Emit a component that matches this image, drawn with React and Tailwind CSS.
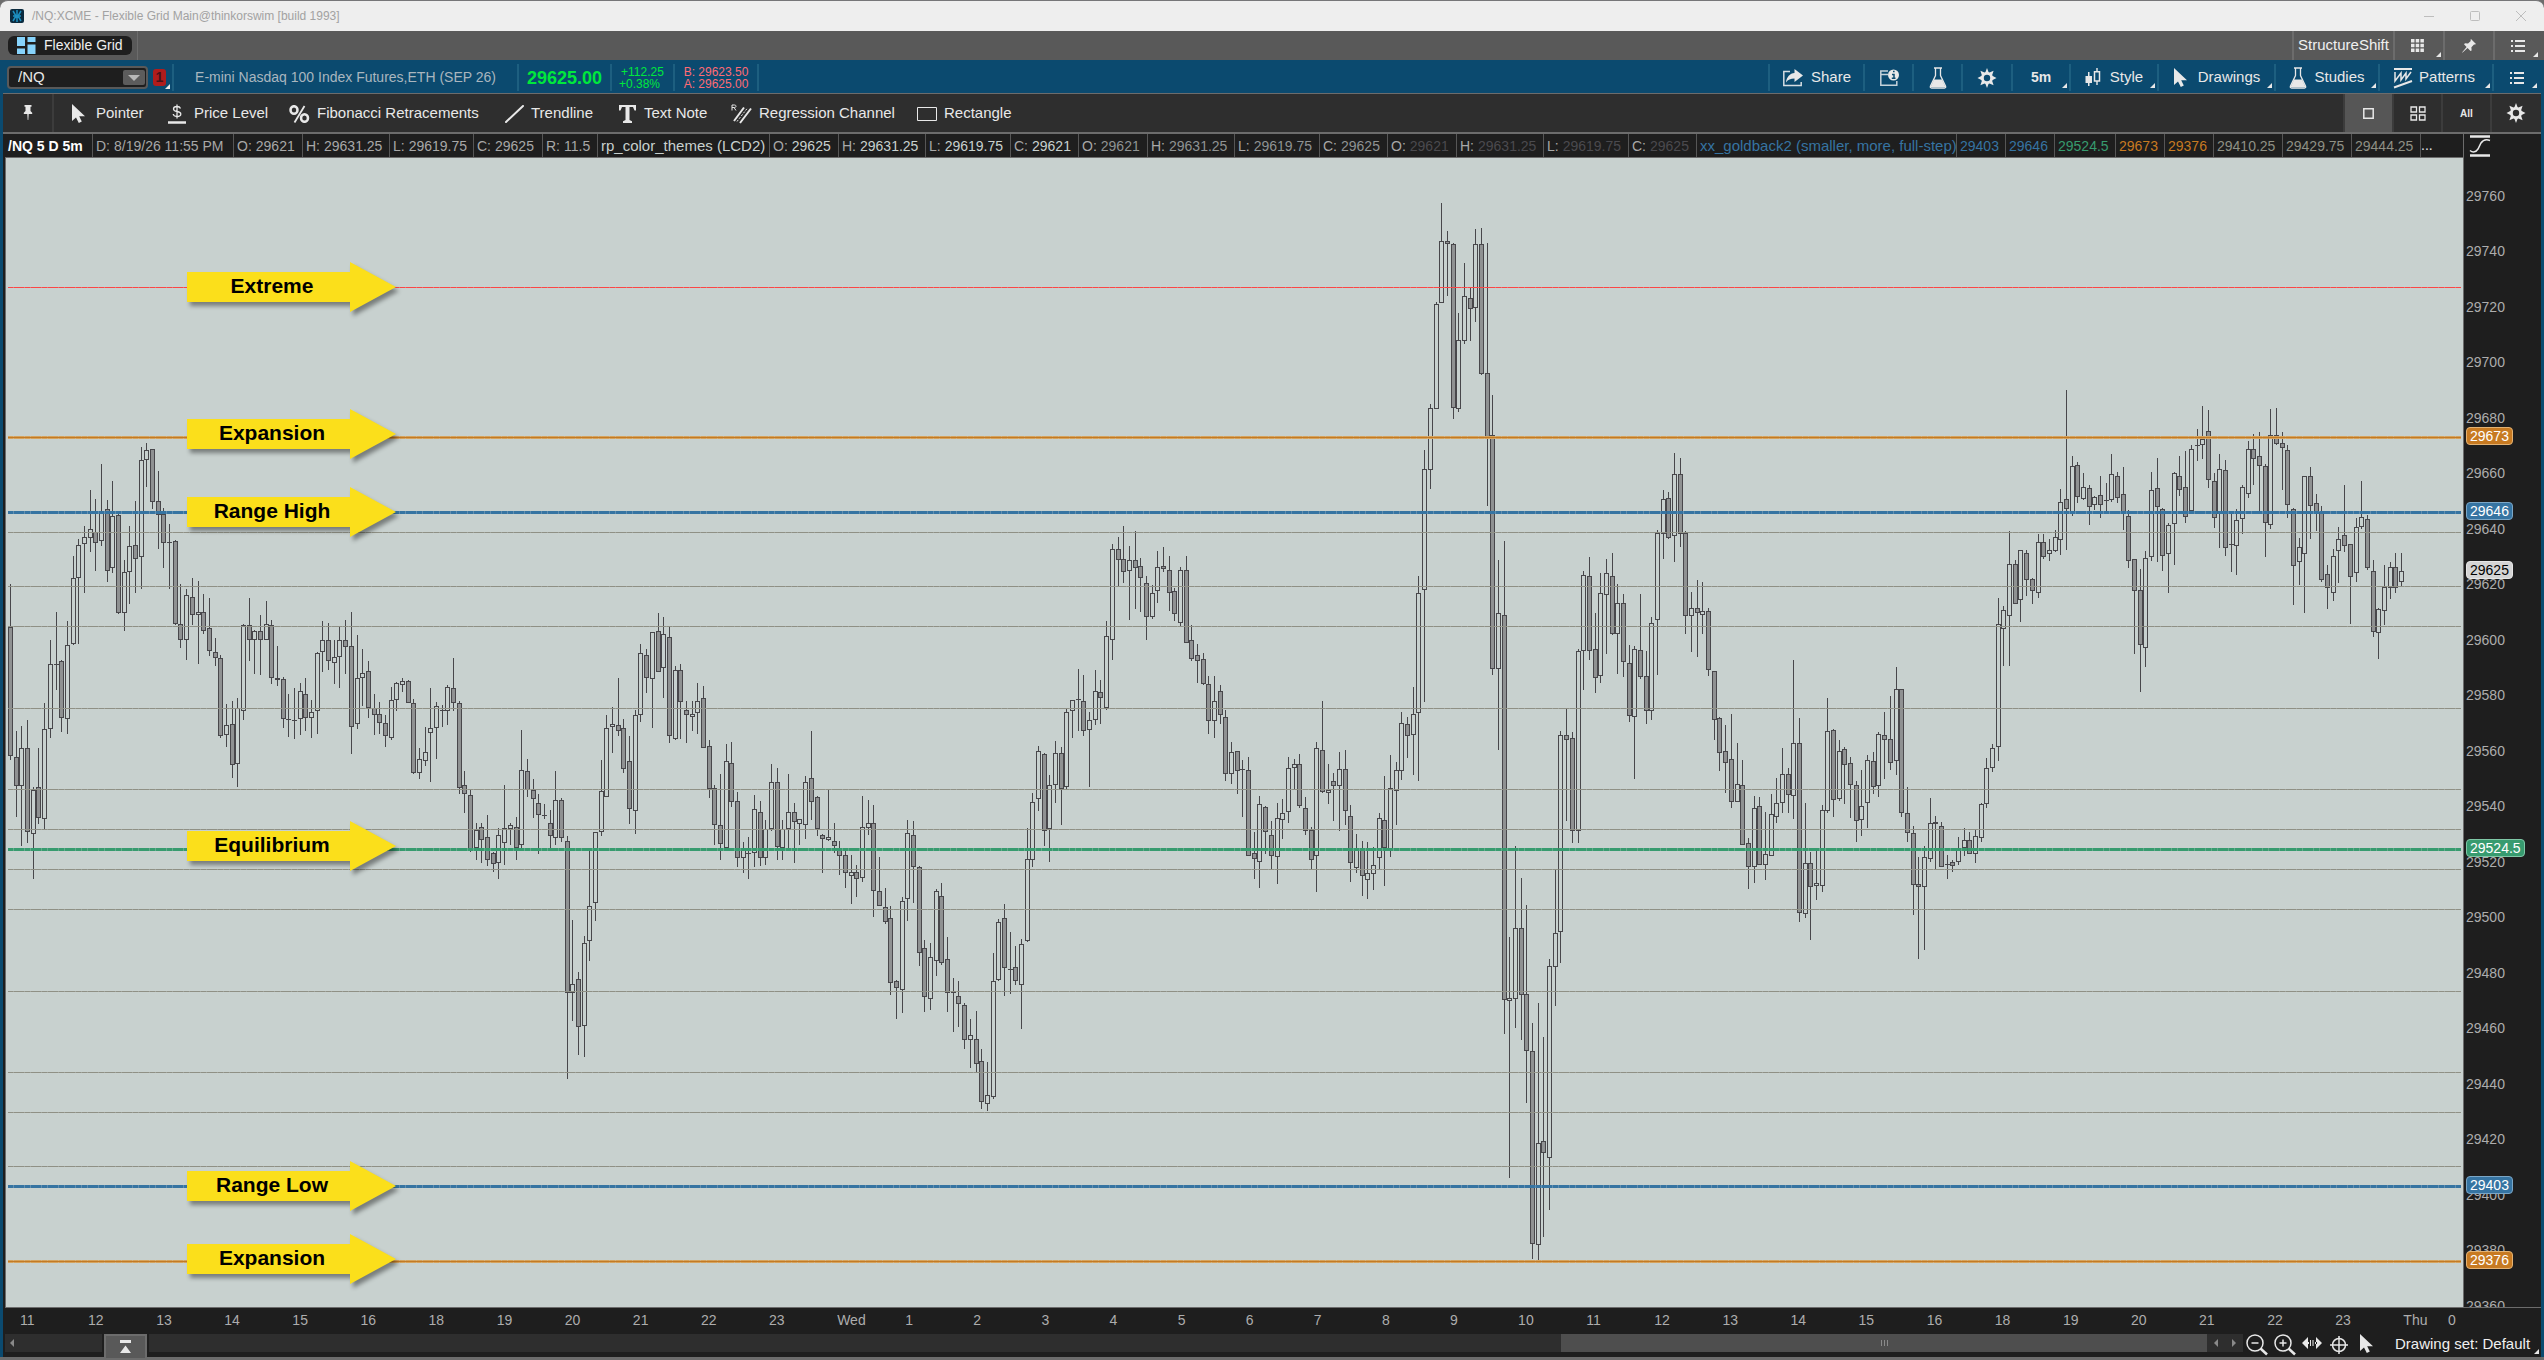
import React from "react";

// Plot area in its own units, stretched to whatever room the page gives it
const PLOT_W = 2457;
const PLOT_H = 1149;
const PRICE_TOP = 29773.7;
const PX_PER_POINT = 2.7743;
const BAR_STEP = 5.679;

const priceToY = (price) => (PRICE_TOP - price) * PX_PER_POINT;
const pct = (value, total) => `${(value / total) * 100}%`;

// 5 minute bars, oldest first: high, body top, body bottom, low, up/down.
// Every run is measured down from its own top edge at its own scale.
const RUNS = [
  {
    top: 82,
    scale: 2.24,
    bars: `770 866 1156 1165 d,1100 1158 1222 1292 d,1089 1137 1222 1357 u,1075 1137 1327 1351 d,1225 1231 1330 1431 u,
1138 1226 1294 1308 d,1037 1096 1297 1320 u,896 950 1095 1116 u,833 949 951 1008 d,940 943 1070 1102 d,
853 907 1073 1106 u,708 758 905 907 u,670 684 758 905 u,641 666 682 791 u,560 648 667 699 u,
580 655 678 741 d,502 612 675 685 u,582 603 741 766 d,540 618 734 747 u,612 616 835 838 d,
717 744 835 876 u,641 686 743 815 u,585 684 714 791 d,464 493 711 782 u,455 471 492 553 u,
468 469 586 603 d,517 585 617 692 d,600 614 678 735 d,636 677 678 782 d,672 674 861 862 d,
771 861 897 914 d,782 796 895 941 u,757 800 839 862 d,764 833 841 950 u,793 834 875 883 d,
802 870 920 932 d,892 923 937 954 d,930 937 1110 1116 d,1039 1087 1109 1136 u,1033 1085 1175 1205 d,
1026 1049 1173 1225 u,860 863 1054 1075 u,802 863 897 943 d,874 875 895 972 u,840 875 897 974 d,
809 861 897 897 u,852 863 982 995 d,909 980 985 999 d,978 984 1074 1093 d,1017 1074 1075 1113 d,
1004 1076 1078 1118 d,992 1011 1074 1109 u,981 1016 1070 1100 d,1031 1058 1070 1116 u,923 926 1056 1107 u,
853 897 924 968 u,858 897 944 963 d,895 933 947 995 u,867 895 935 1004 u,851 895 911 972 d,
833 910 1090 1151 d,885 982 1085 1095 u,916 969 982 1044 u,943 966 1049 1070 d,1017 1049 1063 1109 d,
1035 1061 1081 1107 d,1064 1081 1112 1136 d,1001 1031 1115 1120 u,989 993 1030 1056 u,981 987 997 1012 u,
986 987 1038 1038 d,1028 1038 1195 1197 d,1138 1163 1193 1207 u,1091 1147 1166 1178 u,1003 1094 1105 1214 u,
1034 1043 1094 1163 u,1042 1052 1053 1091 d,997 1002 1054 1086 u,937 1004 1038 1055 d,1033 1036 1227 1241 d,
1189 1221 1241 1284 d,1232 1243 1367 1372 d,1306 1321 1361 1388 u,1306 1315 1343 1396 d,1287 1338 1388 1402 d,
1370 1373 1397 1416 d,1317 1333 1395 1431 u,1221 1317 1350 1400 u,1305 1311 1319 1355 u,1292 1315 1361 1389 d,
1098 1187 1355 1367 u,1163 1190 1231 1248 d,1207 1231 1253 1295 d,1241 1260 1289 1375 d,1263 1289 1290 1298 d,
1277 1306 1336 1362 d`,
  },
  {
    top: 582,
    scale: 3,
    bars: `93 181 295 315 u,174 181 295 306 d,288 304 760 1017 d,540 733 760 843 u,696 718 862 945 d,
588 610 857 950 u,330 499 604 663 u,276 277 488 543 u,60 154 277 288 u`,
  },
  {
    top: 82,
    scale: 2.24,
    bars: `1064 1093 1247 1247 u,1046 1084 1090 1149 u,981 1087 1099 1111 d,1073 1093 1184 1193 d,1110 1167 1274 1308 d,
1052 1063 1280 1331 u`,
  },
  {
    top: 342,
    scale: 2.529,
    bars: `364 388 543 561 u,377 393 450 488 d,334 335 452 577 u,286 332 434 434 d,296 340 424 501 u,
320 347 596 615 d,420 431 604 607 u,415 431 511 604 d,508 530 543 615 d,508 540 548 584 u,
463 509 538 592 u,470 502 626 627 d,607 623 732 754 d,721 729 823 873 d,693 823 870 910 d,
617 661 880 880 u,612 664 763 776 d,738 762 905 928 d,865 886 905 943 u,852 892 894 959 d,
746 782 894 928 u,761 790 905 926 d,809 831 905 923 u,668 714 832 837 u,678 714 877 910 d,
809 831 880 910 u,693 788 831 880 u,766 788 814 918 d,806 808 819 873 u,698 714 822 857 u,
584 704 763 809 d,749 752 833 850 d,845 846 857 943 d,732 853 859 862 u,817 863 875 893 d,
862 879 900 948 d,888 898 943 981 d,898 941 950 1022 u,923 941 958 1004 d,749 828 955 966 u,
759 818 829 847 u,771 818 988 1055 d,903 990 1026 1026 d,981 1030 1067 1072 d,1027 1058 1221 1252 d,
1214 1217 1234 1313 d,1004 1013 1239 1297 u,809 841 1008 1065 u,812 846 928 1019 d,926 927 1145 1179 d,
1113 1134 1256 1295 d,1120 1157 1261 1290 u,984 990 1165 1204 u,969 1002 1170 1175 d,1105 1162 1246 1295 d,
1209 1245 1247 1345 d,1216 1255 1274 1333 d,1272 1276 1365 1388 d,1313 1354 1365 1436 u,1292 1362 1426 1447 d,
1388 1420 1522 1540 d,1421 1506 1527 1545 u,1146 1217 1509 1515 u,1060 1066 1213 1216 u,1022 1056 1183 1254 d,
1093 1185 1187 1249 d,1128 1180 1216 1227 d,1110 1124 1226 1338 u,830 909 1115 1118 u,741 765 910 928 u,
622 636 755 787 u,640 643 836 875 d,695 722 832 916 u,609 641 722 766 u,625 641 732 822 d,
529 537 725 732 u,506 507 533 602 u,427 504 506 584 d,443 509 584 597 d,536 557 581 726 u,
430 482 556 569 u,455 485 502 567 d,306 345 527 530 u,111 125 353 405 u,94 125 151 217 d,
66 150 181 210 d,116 153 179 303 u,78 153 171 276 d,147 168 196 283 d,192 211 295 354 d,
215 234 297 301 u,129 170 230 260 u,119 168 174 182 d,142 176 235 281 d,223 229 288 306 d,
169 176 310 319 u,142 178 361 361 d,317 355 402 407 d,364 393 406 463 d,387 403 465 468 d,
445 466 558 592 d,445 509 558 602 u,468 482 543 567 d,530 549 692 711 d,612 638 692 718 u,
635 636 685 744 d,658 680 682 802 d,650 682 900 900 d,840 893 907 959 d,749 770 915 981 u,
773 777 839 895 d,812 848 900 935 d,766 803 902 971 u`,
  },
  {
    top: 562,
    scale: 2.8,
    bars: `221 259 279 333 u,104 133 257 288 u,109 124 133 195 u,95 124 240 246 d,216 247 310 322 d,
300 309 391 417 d,62 77 380 482 u,-53 85 201 204 d,123 197 204 235 u,148 172 184 283 d,
90 138 184 311 u,84 138 254 294 d,238 270 400 454 d,319 362 413 428 u,339 357 436 493 d,
342 429 447 501 u,356 407 430 476 u,260 273 385 417 u,157 281 358 465 d,98 191 362 384 u,
118 141 198 294 u,-22 9 142 168 u,-8 12 44 106 d,-92 -16 41 154 u,-403 -355 -21 171 u`,
  },
  {
    top: 22,
    scale: 2.8,
    bars: `756 810 1147 1462 u,627 639 811 865 u,342 348 640 640 u,64 172 343 343 u,143 172 178 325 d,
177 178 637 669 d,372 449 640 650 u,232 326 450 459 u,301 329 360 451 d,137 180 357 398 u,
134 180 542 546 d,176 541 721 913 d,602 715 1368 1386 d,1064 1211 1370 1596 u,1011 1217 2295 2391 d`,
  },
  {
    top: 562,
    scale: 2.8,
    bars: `608 777 786 1282 u,353 581 780 862 u,442 583 769 896 d,518 768 926 1072 d,848 928 1466 1509 d,
792 1185 1469 1520 u,888 1180 1211 1448 d,669 690 1225 1372 u,419 597 691 801 u,31 43 593 680 u,
-31 43 55 283 d,34 51 310 344 d,-199 -192 310 344 u`,
  },
  {
    top: 22,
    scale: 2.8,
    bars: `1095 1107 1320 1428 u,1056 1110 1318 1344 d,1212 1314 1393 1436 d,1100 1155 1390 1408 u,1061 1101 1161 1327 u,
1044 1110 1270 1274 d,1131 1183 1270 1383 u,1159 1185 1349 1392 d,1302 1351 1500 1518 d,1305 1314 1503 1677 u,
1159 1317 1391 1397 d,1319 1390 1486 1523 d,1224 1239 1486 1512 u,980 989 1231 1386 u,868 894 990 1061 u,
874 889 1001 1005 d,764 824 998 1070 u,778 824 990 1028 d,983 989 1220 1271 d,1154 1199 1220 1322 u,
1120 1197 1211 1336 d,1126 1208 1217 1271 u,1198 1208 1371 1389 d,1375 1376 1511 1568 d,1504 1507 1604 1655 d`,
  },
  {
    top: 562,
    scale: 2.8,
    bars: `14 88 120 204 d,-17 110 229 246 d,64 180 229 229 u,112 183 349 349 d,330 343 411 473 d,
213 245 411 456 u,216 242 405 405 d,258 374 405 448 u,207 264 380 380 u,162 233 271 288 u,
78 152 231 260 u,134 152 209 260 d,-168 65 212 277 u,-6 63 540 566 d,232 399 542 554 u,
370 399 467 616 d,365 455 464 504 u,238 253 464 482 u,-62 32 254 260 u,25 29 223 272 d,
56 88 220 227 u,76 82 125 235 d,104 121 181 274 d,171 183 282 342 d,140 242 279 325 u,
98 113 231 302 u,90 116 187 207 d,34 40 184 216 u,-22 43 55 165 d,-67 54 120 140 d,
-148 -86 114 154 u,-86 -86 259 272 d,188 259 316 342 d,297 315 461 546 d,384 458 467 669 d`,
  },
  {
    top: 212,
    scale: 2.6133,
    bars: `1244 1273 1350 1516 u,1119 1185 1277 1287 u,1166 1182 1187 1304 u,1180 1192 1298 1298 d,1267 1292 1294 1330 d,
1281 1286 1295 1312 d,1220 1248 1287 1294 u,1197 1229 1250 1271 u,1207 1227 1264 1264 d,1201 1218 1264 1288 u,
1132 1133 1222 1233 u,1014 1041 1133 1145 u,977 989 1039 1050 u,596 664 984 1022 u,617 628 676 774 u,
421 508 642 774 u,497 508 611 611 d,470 471 600 659 u,471 479 550 591 d,544 545 577 612 d,
429 450 582 596 u,429 450 488 494 d,442 471 480 499 u,418 437 472 476 u,311 346 443 483 u,
52 338 362 470 d,225 251 371 381 u,240 249 331 348 d,269 306 336 341 u,301 309 357 405 d,
328 333 352 366 u,277 327 354 387 d,295 341 343 370 d,220 272 339 345 u,267 278 334 348 d,
253 325 371 418 d,366 382 499 517 d,494 495 577 742 d,520 576 718 841 d,473 492 726 776 u,
267 314 488 500 u,230 309 357 503 d,361 362 486 525 d,400 405 482 583 u,267 268 402 510 u,
225 278 313 329 d,212 306 383 400 d,196 207 368 370 u,154 197 199 238 d,94 181 195 233 u,
105 160 287 308 d,269 291 386 413 d,220 260 377 465 u,235 262 465 486 d,375 456 458 528 d,
363 393 461 536 u,301 307 390 429 u,186 207 323 335 u,167 207 232 301 d,162 225 250 368 d,
245 251 399 489 d,102 171 404 415 u,99 171 194 195 d,162 191 203 314 d,197 210 354 387 d,
361 362 512 614 d,439 463 503 562 u,277 278 480 635 u,253 278 356 442 d,324 348 371 421 d,
355 371 549 553 d,510 534 569 625 d,468 487 582 604 u,410 442 474 557 u,301 432 459 476 d,
455 456 540 664 d,388 411 530 554 u,290 385 411 416 u,379 390 517 522 d,497 524 684 698 d,
623 624 686 755 u,510 568 631 666 u,502 515 569 598 u,478 515 569 583 d,478 524 553 565 u`,
  },
];

const CANDLES = RUNS.flatMap((run) =>
  run.bars.split(",").map((bar) => {
    const parts = bar.trim().split(" ");
    const [high, open, close, low] = parts
      .slice(0, 4)
      .map((n) => Math.round(run.top + Number(n) / run.scale));
    return { high, top: open, bottom: close, low, up: parts[4] === "u" };
  })
);

const LEVELS = [
  { y: 129, color: "#fb4646", width: 1 },
  { y: 279, color: "#d6a35c", core: "#c27a26", width: 3 },
  { y: 354, color: "#3674a2", width: 3 },
  { y: 374, color: "#8f9085", width: 1 },
  { y: 428, color: "#8f9085", width: 1 },
  { y: 468, color: "#8f9085", width: 1 },
  { y: 550, color: "#8f9085", width: 1 },
  { y: 631, color: "#8f9085", width: 1 },
  { y: 671, color: "#8f9085", width: 1 },
  { y: 691, color: "#379b6f", width: 3 },
  { y: 711, color: "#8f9085", width: 1 },
  { y: 751, color: "#8f9085", width: 1 },
  { y: 833, color: "#8f9085", width: 1 },
  { y: 914, color: "#8f9085", width: 1 },
  { y: 954, color: "#8f9085", width: 1 },
  { y: 1008, color: "#8f9085", width: 1 },
  { y: 1028, color: "#3674a2", width: 3 },
  { y: 1103, color: "#d6a35c", core: "#c27a26", width: 3 },
];

const CALLOUTS = [
  { label: "Extreme", y: 104 },
  { label: "Expansion", y: 251 },
  { label: "Range High", y: 329 },
  { label: "Equilibrium", y: 663 },
  { label: "Range Low", y: 1003 },
  { label: "Expansion", y: 1076 },
];

const PRICE_TICKS = Array.from({ length: 21 }, (_, i) => 29760 - i * 20);

const PRICE_TAGS = [
  { price: 29673, style: "bg-[#c77a22] border-[#e3b273] text-white" },
  { price: 29646, style: "bg-[#3674a2] border-[#7ba6c6] text-white" },
  { price: 29625, style: "bg-[#d4d4d4] border-[#e6e6e6] text-black" },
  { price: 29524.5, style: "bg-[#379b6f] border-[#7fc7a6] text-white" },
  { price: 29403, style: "bg-[#3674a2] border-[#7ba6c6] text-white" },
  { price: 29376, style: "bg-[#c77a22] border-[#e3b273] text-white" },
];

const HOURS = [
  "11", "12", "13", "14", "15", "16", "18", "19", "20", "21", "22", "23", "Wed",
  "1", "2", "3", "4", "5", "6", "7", "8", "9", "10", "11", "12", "13", "14", "15", "16",
  "18", "19", "20", "21", "22", "23", "Thu",
];

const DIM = "text-[#a8a8a8]";
const STATUS = [
  { w: "w-[141px]", key: "D:", value: "8/19/26 11:55 PM", color: DIM },
  { w: "w-[69px]", key: "O:", value: "29621", color: DIM },
  { w: "w-[87px]", key: "H:", value: "29631.25", color: DIM },
  { w: "w-[84px]", key: "L:", value: "29619.75", color: DIM },
  { w: "w-[69px]", key: "C:", value: "29625", color: DIM },
  { w: "w-[55px]", key: "R:", value: "11.5", color: DIM },
  { w: "w-[172px]", value: "rp_color_themes (LCD2)", color: "text-[#c8d1cf] text-[15px]" },
  { w: "w-[69px]", key: "O:", value: "29625", color: "text-[#c8d1cf]" },
  { w: "w-[87px]", key: "H:", value: "29631.25", color: "text-[#c8d1cf]" },
  { w: "w-[85px]", key: "L:", value: "29619.75", color: "text-[#c8d1cf]" },
  { w: "w-[68px]", key: "C:", value: "29621", color: "text-[#c8d1cf]" },
  { w: "w-[69px]", key: "O:", value: "29621", color: "text-[#8f9393]" },
  { w: "w-[87px]", key: "H:", value: "29631.25", color: "text-[#8f9393]" },
  { w: "w-[85px]", key: "L:", value: "29619.75", color: "text-[#8f9393]" },
  { w: "w-[68px]", key: "C:", value: "29625", color: "text-[#8f9393]" },
  { w: "w-[69px]", key: "O:", value: "29621", color: "text-[#4b4a4e]" },
  { w: "w-[87px]", key: "H:", value: "29631.25", color: "text-[#4b4a4e]" },
  { w: "w-[85px]", key: "L:", value: "29619.75", color: "text-[#4b4a4e]" },
  { w: "w-[68px]", key: "C:", value: "29625", color: "text-[#4b4a4e]" },
  { w: "w-[260px]", value: "xx_goldback2 (smaller, more, full-step)", color: "text-[#3674a2] text-[15px]" },
  { w: "w-[49px]", value: "29403", color: "text-[#3674a2]" },
  { w: "w-[49px]", value: "29646", color: "text-[#3674a2]" },
  { w: "w-[61px]", value: "29524.5", color: "text-[#379b6f]" },
  { w: "w-[49px]", value: "29673", color: "text-[#c77a22]" },
  { w: "w-[49px]", value: "29376", color: "text-[#c77a22]" },
  { w: "w-[69px]", value: "29410.25", color: "text-[#8f9085]" },
  { w: "w-[69px]", value: "29429.75", color: "text-[#8f9085]" },
  { w: "w-[69px]", value: "29444.25", color: "text-[#8f9085]" },
];

/* ---------- icons ---------- */

const PointerIcon = () => (
  <svg width="16" height="20" viewBox="0 0 16 20" fill="#e8e8e8">
    <path d="M1 0v17l4-3.6L7.8 19l3-1.4-2.6-5.4H14z" />
  </svg>
);

const FlaskIcon = () => (
  <svg width="18" height="22" viewBox="0 0 18 22" fill="none" stroke="#e8e8e8">
    <path d="M5 1h8M6.5 1v7.5L1.5 19c-.6 1.400 0 2 1 2h13c1 0 1.600-.6 1-2l-5-10.500V1" strokeWidth="1.300" />
    <path d="M5 12.500h8l3.500 7.500h-15z" fill="#e8e8e8" stroke="none" />
  </svg>
);

const GearIcon = () => (
  <svg width="20" height="20" viewBox="0 0 20 20" fill="#e8e8e8">
    <path
      fillRule="evenodd"
      d="M10 0l1.500 4 1 .4L16.600 2.800 15.200 6.900l.5 1.200L19.500 10l-3.800 1.900-.5 1.200 1.400 4.100-4.100-1.600-1 .4L10 20l-1.500-4-1-.4-4.100 1.600 1.400-4.100-.5-1.200L.5 10l3.800-1.900.5-1.200L3.400 2.800l4.100 1.600 1-.4zM10 6.800a3.200 3.200 0 100 6.400 3.200 3.200 0 000-6.400z"
    />
  </svg>
);

const ListIcon = () => (
  <svg width="16" height="14" viewBox="0 0 16 14" fill="#e8e8e8">
    <path d="M1 1h2v2H1zM5 1h10v2H5zM1 6h2v2H1zM5 6h10v2H5zM1 11h2v2H1zM5 11h10v2H5z" />
  </svg>
);

const ShareIcon = () => (
  <svg width="22" height="18" viewBox="0 0 22 18" fill="none" stroke="#d5dde2" strokeWidth="1.500">
    <path d="M8 2.500H1.800v14h17.400V13" />
    <path d="M12.500 0l8.500 6.500-8.500 6.500V9.500C8.500 9.500 6 10.500 4 13.500 4.500 8 8 4.200 12.500 4z" fill="#e8e8e8" stroke="none" />
  </svg>
);

const InfoIcon = () => (
  <svg width="20" height="18" viewBox="0 0 20 18" fill="none" stroke="#c5d2da" strokeWidth="1.500">
    <path d="M9 2H1.800v14.200h16V12M2 5.500h7" />
    <circle cx="14.500" cy="6" r="5.500" fill="#e8e8e8" stroke="none" />
    <path d="M13 5.500h2V9M12.800 9.200h3.700M14 2.600h1.600" stroke="#0b4a6f" />
  </svg>
);

const StyleIcon = () => (
  <svg width="16" height="20" viewBox="0 0 16 20" fill="#e8e8e8">
    <path d="M3 4h1.500v14H3zM.5 8h6.500v7H.5zM11.300 0h1.400v4h-1.400zM11.300 13h1.400v4h-1.400z" />
    <path d="M9.500 3.800h5V13h-5z" fill="none" stroke="#e8e8e8" strokeWidth="1.500" />
  </svg>
);

const PatternsIcon = () => (
  <svg width="20" height="22" viewBox="0 0 20 22" fill="none" stroke="#e8e8e8" strokeWidth="2">
    <path d="M1 2h18M1 20.500L19 14" />
    <path d="M2 5v9l6-8v7l5-7v6l5-7" strokeWidth="1.500" />
  </svg>
);

const GridDotsIcon = () => (
  <svg width="13" height="13" viewBox="0 0 13 13" fill="#e8e8e8">
    <path d="M0 0h3.500v3.500H0zM4.700 0h3.500v3.500H4.700zM9.400 0h3.500v3.500H9.400zM0 4.700h3.500v3.500H0zM4.700 4.700h3.500v3.500H4.700zM9.400 4.700h3.500v3.500H9.400zM0 9.400h3.500v3.500H0zM4.700 9.400h3.500v3.500H4.700zM9.400 9.400h3.500v3.500H9.400z" />
  </svg>
);

const PushpinIcon = () => (
  <svg width="14" height="14" viewBox="0 0 14 14" fill="#e8e8e8">
    <path d="M9 0l5 5-1 .6-1-.2-2.600 2.800.2 3.200L8.500 12 5.600 9 .6 13.600 0 13.400 4.600 8 2 5.300l1-1 3 .2L8.800 2 8.500 1z" />
  </svg>
);

const UprightPinIcon = () => (
  <svg width="10" height="16" viewBox="0 0 10 16" fill="#e8e8e8">
    <path d="M1.500 0h7v1.800h-1V6l1.700 1.800V9H.8V7.800L2.500 6V1.800h-1zM4.300 9h1.400l-.4 6h-.6z" />
  </svg>
);

const PriceLevelIcon = () => (
  <svg width="18" height="20" viewBox="0 0 18 20" fill="none" stroke="#e8e8e8" strokeWidth="1.300">
    <path d="M12.500 4.500C12 3 10.800 2.500 9 2.500c-2 0-3.500.8-3.500 2.400C5.500 8.500 12.800 6.500 12.800 10c0 1.600-1.600 2.500-3.800 2.500-2 0-3.500-.8-3.800-2.500M9 .5v14" />
    <path d="M0 18.500h18" strokeWidth="2.500" />
  </svg>
);

const PercentIcon = () => (
  <svg width="21" height="18" viewBox="0 0 21 18" fill="none" stroke="#e8e8e8" strokeWidth="2.500">
    <ellipse cx="5" cy="5" rx="3.500" ry="3.800" />
    <ellipse cx="15.500" cy="13" rx="3.500" ry="3.800" />
    <path d="M15.500 1L5.500 17.500" strokeWidth="1.800" />
  </svg>
);

const TrendlineIcon = () => (
  <svg width="19" height="18" viewBox="0 0 19 18" stroke="#e8e8e8" strokeWidth="2" strokeLinecap="round">
    <path d="M1 17L18 1" />
  </svg>
);

const TextIcon = () => (
  <svg width="17" height="18" viewBox="0 0 17 18" fill="#e8e8e8">
    <path d="M0 0h17v5.500h-1.500L14 2h-3.500v13l2.500 1.300V18H4v-1.700L6.500 15V2H3L1.500 5.500H0z" />
  </svg>
);

const RegressionIcon = () => (
  <svg width="21" height="20" viewBox="0 0 21 20" fill="none" stroke="#e8e8e8">
    <path d="M1 6.500V1h2.500c2 0 2 2.500 0 2.500H1M3 3.500l2 3" />
    <path d="M3 17L13 3.500M9 19L20 4.500" strokeWidth="2" />
    <path d="M6 17.500L16.500 4" strokeDasharray="2 1.500" />
  </svg>
);

const RectangleIcon = () => (
  <svg width="20" height="14" viewBox="0 0 20 14" fill="none" stroke="#e8e8e8">
    <path d="M.5.5h19v13H.5z" />
  </svg>
);

const MagnifierIcon = ({ plus }) => (
  <svg width="22" height="22" viewBox="0 0 22 22" fill="none" stroke="#e8e8e8" strokeWidth="1.500">
    <circle cx="9" cy="9" r="8" />
    <path d={plus ? "M5.500 9h7M9 5.500v7" : "M5.500 9h7"} />
    <path d="M14.500 14.500l6.500 6" strokeWidth="2.500" />
  </svg>
);

const Corner = () => (
  <svg className="absolute right-[2px] bottom-[3px]" width="5" height="5" viewBox="0 0 5 5" fill="#e8e8e8">
    <path d="M5 0v5H0z" />
  </svg>
);

/* ---------- bars above the chart ---------- */

function TitleBar() {
  return (
    <header className="flex h-[31px] items-center rounded-t-lg border-t border-[#767678] bg-[#eeeeee] pl-[10px]">
      <svg width="14" height="14" viewBox="0 0 14 14">
        <rect width="14" height="14" rx="2" fill="#0b2b3f" />
        <path d="M3 2l3 5-3 5M7 1v12M11 2L8 7l3 5M3 7h8" stroke="#1c8fc0" strokeWidth="1.500" fill="none" />
      </svg>
      <h1 className="ml-2 text-[12px] text-[#a2a2a2]">
        /NQ:XCME - Flexible Grid Main@thinkorswim [build 1993]
      </h1>
      <div className="ml-auto flex text-[#bdbdbd]">
        <button aria-label="Minimize" className="flex w-[46px] justify-center">
          <svg width="10" height="10" viewBox="0 0 10 10" stroke="currentColor"><path d="M0 5.500h10" /></svg>
        </button>
        <button aria-label="Maximize" className="flex w-[46px] justify-center">
          <svg width="10" height="10" viewBox="0 0 10 10" stroke="currentColor" fill="none"><rect x=".5" y=".5" width="9" height="9" rx="1" /></svg>
        </button>
        <button aria-label="Close" className="flex w-[46px] justify-center">
          <svg width="10" height="10" viewBox="0 0 10 10" stroke="currentColor"><path d="M0 0l10 10M10 0L0 10" /></svg>
        </button>
      </div>
    </header>
  );
}

function TabBar() {
  const cell = "relative flex h-full items-center justify-center border-l-2 border-[#6c6c6c]";
  return (
    <nav className="flex h-[29px] items-center bg-[#595959] pr-1 pl-2 text-[#f0f0f0]">
      <button className="flex h-[19px] w-[124px] items-center gap-2 rounded-md bg-[#1e1e1e] pl-[9px] text-[14px]">
        <svg width="19" height="17" viewBox="0 0 19 17" fill="#87d3fb">
          <path d="M0 0h8v9H0zM10.500 0h8v5h-8zM0 11.500h8V17H0zM10.500 7.500h8V17h-8z" />
        </svg>
        Flexible Grid
      </button>
      <div className="ml-[5px] h-full w-px bg-[#6c6c6c]" />
      <div className="ml-auto flex h-full items-center">
        <button className={`${cell} w-[101px] text-[15px]`}>StructureShift</button>
        <button aria-label="Grid layout" className={`${cell} w-[50px] pr-1`}><GridDotsIcon /><Corner /></button>
        <button aria-label="Pin" className={`${cell} w-[50px]`}><PushpinIcon /></button>
        <button aria-label="Tab menu" className={`${cell} w-[47px]`}><ListIcon /><Corner /></button>
      </div>
    </nav>
  );
}

function SymbolBar() {
  const cell = "relative flex h-[27px] items-center justify-center border-l-2 border-[#1d5f80]";
  return (
    <div className="flex h-[33px] items-center bg-[#0b4a6f] pt-[2px] pr-[2px] pl-1 text-[15px] text-[#e8e8e8]">
      <form className="flex h-[23px] w-[141px] items-center rounded-sm border-2 border-[#595959] bg-[#1e1e1e] pr-px">
        <input aria-label="Symbol" defaultValue="/NQ" className="w-full min-w-0 flex-1 bg-transparent pl-[9px] text-[15px] outline-none" />
        <button type="button" aria-label="Symbol list" className="flex h-[15px] w-[22px] items-center justify-center rounded-xs bg-[#5c5c5c]">
          <svg width="12" height="6" viewBox="0 0 12 6" fill="#b8b8b8"><path d="M0 0h12L6 6z" /></svg>
        </button>
      </form>
      <button className="relative ml-[5px] flex h-[23px] w-[17px] items-center text-[14px] font-bold text-[#48111a]">
        <span className="flex h-[17px] w-[13px] items-center justify-center rounded-[3px] bg-[#b01c1c]">1</span>
        <svg className="absolute right-0 bottom-0" width="5" height="5" viewBox="0 0 5 5" fill="#e8e8e8"><path d="M5 0v5H0z" /></svg>
      </button>
      <div className={`${cell} ml-[2px] w-[345px] text-[14px] text-[#a9b6bf]`}>E-mini Nasdaq 100 Index Futures,ETH (SEP 26)</div>
      <div className={`${cell} w-[93px] text-lg font-bold text-[#00e83c]`}>29625.00</div>
      <div className={`${cell} w-[63px] flex-col text-[12px] leading-3 text-[#00e83c]`}>
        <span>+112.25</span>
        <span className="self-start pl-[7px]">+0.38%</span>
      </div>
      <div className={`${cell} w-[84px] flex-col text-[12px] leading-3 text-[#ff6b74]`}>
        <span>B: 29623.50</span>
        <span>A: 29625.00</span>
      </div>
      <div className={cell} />
      <div className="ml-auto flex items-center">
        <button className={`${cell} w-[95px] gap-[7px]`}><ShareIcon />Share</button>
        <button aria-label="Info" className={`${cell} w-[49px]`}><InfoIcon /></button>
        <button aria-label="Study list" className={`${cell} w-[49px]`}><FlaskIcon /></button>
        <button aria-label="Chart settings" className={`${cell} w-[50px]`}><GearIcon /></button>
        <button className={`${cell} w-[58px] text-[14px] font-bold`}>5m<Corner /></button>
        <button className={`${cell} w-[88px] gap-[9px]`}><StyleIcon />Style<Corner /></button>
        <button className={`${cell} w-[117px] gap-[9px]`}><PointerIcon />Drawings<Corner /></button>
        <button className={`${cell} w-[104px] gap-[7px]`}><FlaskIcon />Studies<Corner /></button>
        <button className={`${cell} w-[114px] gap-[6px] pr-1`}><PatternsIcon />Patterns<Corner /></button>
        <button aria-label="Chart menu" className={`${cell} w-[47px]`}><ListIcon /><Corner /></button>
      </div>
    </div>
  );
}

const TOOLS = [
  { w: "w-[98px]", name: "Pointer", icon: <PointerIcon /> },
  { w: "w-[122px]", name: "Price Level", icon: <PriceLevelIcon /> },
  { w: "w-[215px]", name: "Fibonacci Retracements", icon: <PercentIcon /> },
  { w: "w-[113px]", name: "Trendline", icon: <TrendlineIcon /> },
  { w: "w-[114px]", name: "Text Note", icon: <TextIcon /> },
  { w: "w-[186px]", name: "Regression Channel", icon: <RegressionIcon /> },
  { w: "w-[100px]", name: "Rectangle", icon: <RectangleIcon /> },
];

function DrawingBar() {
  const cell = "flex h-full w-[49px] items-center justify-center border-l-2 border-[#3c3c3c]";
  return (
    <div className="flex h-[41px] items-center border-t border-b-2 border-[#6c6c6c] bg-[#2e2e2e] text-[15px] text-[#e8e8e8]">
      <button aria-label="Keep toolbar open" className="flex h-full w-[51px] items-center justify-center border-r-2 border-[#3c3c3c]">
        <UprightPinIcon />
      </button>
      <div className="ml-[15px] flex pt-px">
        {TOOLS.map((tool) => (
          <button key={tool.name} className={`${tool.w} flex items-center gap-[7px] text-left whitespace-nowrap`}>
            <span className="flex min-w-[20px] justify-center">{tool.icon}</span>
            {tool.name}
          </button>
        ))}
      </div>
      <div className="ml-auto flex h-full pr-[2px]">
        <button aria-label="Single drawing" className={`${cell} bg-[#565656]`}>
          <svg width="11" height="11" viewBox="0 0 11 11" fill="none" stroke="#e8e8e8" strokeWidth="1.500"><path d="M.8.8h9.400v9.400H.8z" /></svg>
        </button>
        <button aria-label="Drawing groups" className={cell}>
          <svg width="16" height="15" viewBox="0 0 16 15" fill="none" stroke="#e8e8e8" strokeWidth="1.300">
            <path d="M1 1h5.500v5H1zM9.500 1H15v5H9.500zM1 9h5.500v5H1zM9.500 9H15v5H9.500z" />
          </svg>
        </button>
        <button className={`${cell} text-[10px] font-bold`}>All</button>
        <button aria-label="Drawing settings" className={cell}><GearIcon /></button>
      </div>
    </div>
  );
}

function StatusRow() {
  return (
    <div className="flex h-[24px] items-center border-b border-[#6c6c6c] text-[14px] whitespace-nowrap">
      <strong className="w-[87px] pt-px pl-[3px] text-white">/NQ 5 D 5m</strong>
      {STATUS.map((cell, i) => (
        <span key={i} className={`${cell.w} ${cell.color} flex h-full shrink-0 items-center gap-1 border-l border-[#565656] pt-px pl-[3px]`}>
          {cell.key && <span className={DIM}>{cell.key}</span>}
          {cell.value}
        </span>
      ))}
      <span className="flex h-full items-center border-l border-[#565656] text-[#e8e8e8]">...</span>
    </div>
  );
}

/* ---------- chart ---------- */

function Candle({ index, bar }) {
  const x = Math.floor(4.6 + BAR_STEP * index);
  const height = Math.max(bar.bottom - bar.top, 1);
  return (
    <g>
      <rect x={x} y={bar.high} width="1" height={Math.max(bar.low - bar.high, 1)} fill="#48474b" />
      <rect x={x - 2} y={bar.top} width="5" height={height} fill="#48474b" />
      {height > 2 && (
        <rect x={x - 1} y={bar.top + 1} width="3" height={height - 2} fill={bar.up ? "#c8d1cf" : "#8f9192"} />
      )}
    </g>
  );
}

function Callout({ label, y }) {
  return (
    <div className="absolute left-[181px] h-[50px] w-[210px]" style={{ top: pct(y, PLOT_H) }}>
      <svg className="absolute inset-0 drop-shadow-[3px_4px_2px_rgba(0,0,0,0.4)]" width="210" height="50" viewBox="0 0 210 50">
        <path d="M0 10h163V0l46 25-46 25V40H0z" fill="#fbdf1b" />
      </svg>
      <div className="relative flex h-[48px] w-[170px] items-center justify-center text-[21px] font-bold text-black">{label}</div>
    </div>
  );
}

function Plot() {
  return (
    <div className="relative min-w-0 flex-1 overflow-hidden border-l border-[#6c6c6c] bg-[#c8d1cf]">
      <svg
        className="block h-full w-full"
        viewBox={`0 0 ${PLOT_W} ${PLOT_H}`}
        preserveAspectRatio="none"
        shapeRendering="crispEdges"
      >
        {CANDLES.map((bar, i) => (
          <Candle key={i} index={i} bar={bar} />
        ))}
        {LEVELS.map(({ y, color, core, width }) => (
          <g key={y} fill="none">
            <path d={`M2 ${y + 0.5}H2455`} stroke={color} strokeWidth={width} opacity="0.7" />
            <path d={`M2 ${y + 0.5}H2455`} stroke={color} strokeWidth={width} strokeDasharray="5 0.68" />
            {core && <path d={`M2 ${y + 0.5}H2455`} stroke={core} strokeWidth="1" />}
          </g>
        ))}
      </svg>
      {CALLOUTS.map((callout) => (
        <Callout key={callout.y} {...callout} />
      ))}
    </div>
  );
}

function PriceAxis() {
  return (
    <div className="relative w-[78px] overflow-hidden border-l border-[#6c6c6c] text-[14px] leading-4 text-[#adadad]">
      {PRICE_TICKS.map((price) => (
        <span key={price} className="absolute left-[2px] -translate-y-1/2" style={{ top: pct(priceToY(price), PLOT_H) }}>
          {price}
        </span>
      ))}
      {PRICE_TAGS.map(({ price, style }) => (
        <span
          key={price}
          className={`${style} absolute left-[2px] -translate-y-1/2 rounded-[4px] border px-[3px]`}
          style={{ top: pct(priceToY(price) - 1, PLOT_H) }}
        >
          {price}
        </span>
      ))}
    </div>
  );
}

function TimeAxis() {
  return (
    <div className="relative h-[27px] overflow-hidden border-t border-[#6c6c6c] text-[14px] leading-[24px] text-[#adadad]">
      {HOURS.map((hour, i) => (
        <span key={i} className="absolute top-0" style={{ left: pct(15 + i * 68.15, 2538) }}>
          {hour}
        </span>
      ))}
      <span className="absolute top-0" style={{ left: pct(2445, 2538) }}>0</span>
    </div>
  );
}

function BottomBar() {
  return (
    <footer className="flex h-[23px] text-[15px] text-[#f0f0f0]">
      <button aria-label="Scroll left" className="flex h-[18px] w-[97px] items-center bg-[#2e2e2e] pl-[5px]">
        <svg width="4" height="8" viewBox="0 0 4 8" fill="#8a8a8a"><path d="M4 0v8L0 4z" /></svg>
      </button>
      <button aria-label="Expand panel" className="ml-[2px] flex h-[26px] w-[43px] items-center justify-center border-2 border-[#6c6c6c] bg-[#595959]">
        <svg width="11" height="14" viewBox="0 0 11 14" fill="#e8e8e8"><path d="M0 0h11v3H0zM5.500 5.500L11 13H0z" /></svg>
      </button>
      <div className="ml-[2px] flex h-[18px] flex-1 bg-[#2e2e2e]">
        <div className="flex-[1413]" />
        <div className="flex flex-[646] items-center justify-center gap-[2px] bg-[#4e4e4e]">
          <i className="h-[6px] w-px bg-[#8a8a8a]" />
          <i className="h-[6px] w-px bg-[#8a8a8a]" />
          <i className="h-[6px] w-px bg-[#8a8a8a]" />
        </div>
        <div className="flex w-[36px] items-center justify-around">
          <svg width="4" height="8" viewBox="0 0 4 8" fill="#8a8a8a"><path d="M4 0v8L0 4z" /></svg>
          <svg width="4" height="8" viewBox="0 0 4 8" fill="#8a8a8a"><path d="M0 0v8l4-4z" /></svg>
        </div>
      </div>
      <div className="relative flex w-[298px] items-start">
        <button aria-label="Zoom out" className="w-[28px] pl-[3px]"><MagnifierIcon /></button>
        <button aria-label="Zoom in" className="w-[28px] pl-[3px]"><MagnifierIcon plus /></button>
        <button aria-label="Fit width" className="w-[28px] pt-[2px] pl-[3px]">
          <svg width="20" height="14" viewBox="0 0 20 14" fill="#e8e8e8"><path d="M6 1v12L0 7zM14 1v12l6-6zM8 4h1v6H8zM10.500 4h1v6h-1zM5 6h2v2H5zM13 6h2v2h-2z" /></svg>
        </button>
        <button aria-label="Crosshair" className="w-[28px] pt-[2px] pl-[3px]">
          <svg width="18" height="18" viewBox="0 0 18 18" fill="none" stroke="#e8e8e8" strokeWidth="1.500"><circle cx="9" cy="9" r="6.500" /><path d="M9 0v18M0 9h18" /></svg>
        </button>
        <button aria-label="Pointer" className="w-[40px] pl-[4px]"><PointerIcon /></button>
        <button className="pt-px text-[15px] leading-[18px] whitespace-nowrap">Drawing set: Default</button>
        <Corner />
      </div>
    </footer>
  );
}

export default function App() {
  return (
    <div className="flex h-screen flex-col overflow-hidden bg-[#6c6c6c] font-['Liberation_Sans',Arial,sans-serif] select-none">
      <TitleBar />
      <TabBar />
      <main className="flex min-h-0 flex-1 flex-col bg-[#0b4a6f] px-[3px]">
        <SymbolBar />
        <DrawingBar />
        <section className="flex min-h-0 flex-1 flex-col bg-[#1e1e1e] pl-[2px]">
          <div className="flex">
            <div className="min-w-0 flex-1">
              <StatusRow />
            </div>
            <button aria-label="Axis scale" className="flex w-[78px] items-center border-l border-[#6c6c6c] pl-[5px]">
              <svg width="22" height="22" viewBox="0 0 22 22" fill="none" stroke="#e8e8e8">
                <path d="M1 1.500h20M1 20.500h20" strokeWidth="2.500" />
                <path d="M1 15.500c3 2.500 6 1.500 8-1.500l3-6c2-3 5-4 9-2.500" strokeWidth="1.500" />
              </svg>
            </button>
          </div>
          <div className="flex min-h-0 flex-1">
            <Plot />
            <PriceAxis />
          </div>
          <TimeAxis />
          <BottomBar />
        </section>
      </main>
      <div className="h-[3px]" />
    </div>
  );
}
